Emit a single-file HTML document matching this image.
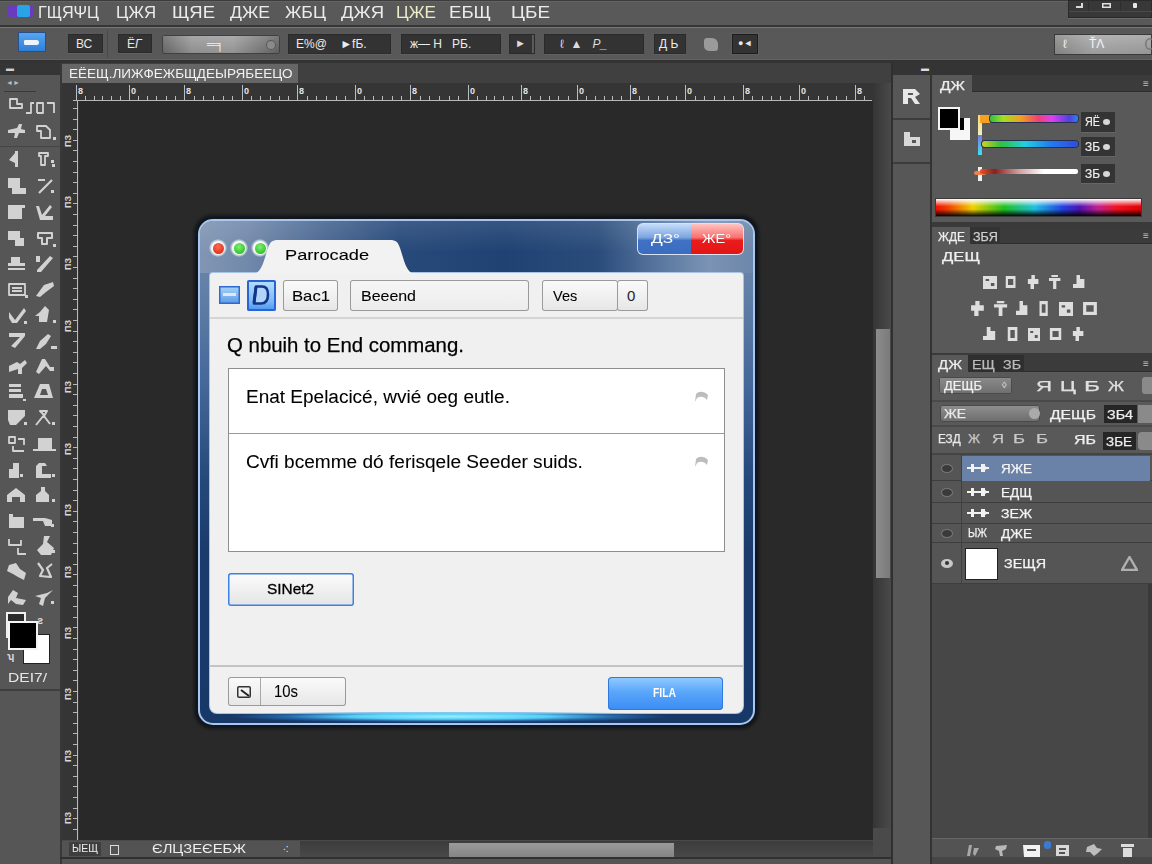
<!DOCTYPE html><html><head><meta charset="utf-8"><style>
*{margin:0;padding:0;box-sizing:border-box}
html,body{width:1152px;height:864px;overflow:hidden;background:#4a4a4a;font-family:"Liberation Sans",sans-serif}
div,span,svg{position:absolute}
.t{white-space:nowrap;line-height:1}
.db{background:#333333;box-shadow:inset 0 0 0 1px #2b2b2b,0 1px 0 #626262}
</style></head><body>
<div style="left:0px;top:0px;width:1152px;height:26px;background:#595959"></div>
<div style="left:0px;top:0px;width:1152px;height:1px;background:#3c3c3c"></div>
<div style="left:0px;top:1px;width:1152px;height:1px;background:#636363"></div>
<div style="left:0px;top:25px;width:1152px;height:2px;background:#363636"></div>
<div style="left:8px;top:5px;width:25px;height:12px;background:#6b3bbf;border-radius:2px"></div>
<div style="left:17px;top:5px;width:13px;height:12px;background:#29a3e8;border-radius:2px"></div>
<span class="t" style="left:38px;top:4px;font-size:17px;color:#ececec;transform-origin:0 0;transform:scaleX(0.950);">ГЩЯΨЦ</span>
<span class="t" style="left:116px;top:4px;font-size:17px;color:#ececec;transform-origin:0 0;transform:scaleX(0.986);">ЦЖЯ</span>
<span class="t" style="left:172px;top:4px;font-size:17px;color:#ececec;transform-origin:0 0;transform:scaleX(1.087);">ЩЯЕ</span>
<span class="t" style="left:230px;top:4px;font-size:17px;color:#ececec;transform-origin:0 0;transform:scaleX(1.038);">ДЖЕ</span>
<span class="t" style="left:285px;top:4px;font-size:17px;color:#ececec;transform-origin:0 0;transform:scaleX(1.040);">ЖБЦ</span>
<span class="t" style="left:341px;top:4px;font-size:17px;color:#ececec;transform-origin:0 0;transform:scaleX(1.089);">ДЖЯ</span>
<span class="t" style="left:396px;top:4px;font-size:17px;color:#ecebc8;transform-origin:0 0;transform:scaleX(1.010);">ЦЖЕ</span>
<span class="t" style="left:449px;top:4px;font-size:17px;color:#ececec;transform-origin:0 0;transform:scaleX(1.093);">ЕБЩ</span>
<span class="t" style="left:511px;top:4px;font-size:17px;color:#ececec;transform-origin:0 0;transform:scaleX(1.112);">ЦБЕ</span>
<div style="left:1068px;top:0px;width:84px;height:18px;background:#383838;box-shadow:inset 0 0 0 1px #2a2a2a,0 1px 0 #6a6a6a"></div>
<div style="left:1069px;top:11px;width:83px;height:1px;background:#4a4a4a"></div>
<div style="left:1088px;top:0px;width:1px;height:11px;background:#2e2e2e"></div>
<div style="left:1120px;top:0px;width:1px;height:11px;background:#2e2e2e"></div>
<div style="left:1076px;top:3px;width:7px;height:5px;box-shadow:inset -2px -2px 0 #d8d8d8"></div>
<div style="left:1102px;top:3px;width:9px;height:5px;box-shadow:inset 0 0 0 1.5px #e0e0e0"></div>
<div style="left:1133px;top:3px;width:4px;height:5px;background:#e8e8e8;border-radius:1px"></div>
<div style="left:0px;top:27px;width:1152px;height:35px;background:#585858"></div>
<div style="left:0px;top:27px;width:1152px;height:1px;background:#767676"></div>
<div style="left:0px;top:59px;width:1152px;height:1px;background:#626262"></div>
<div style="left:0px;top:60px;width:1152px;height:3px;background:#333333"></div>
<div style="left:19px;top:33px;width:26px;height:18px;background:linear-gradient(#56a6f4,#2f7fd8);box-shadow:0 0 0 1px #2a4f88"></div>
<div style="left:24px;top:40px;width:15px;height:5px;background:#f0f4ff;border-radius:2px 4px 4px 2px"></div>
<div class="db" style="left:68px;top:34px;width:35px;height:19px;"></div>
<span class="t" style="left:76px;top:38px;font-size:12px;color:#e8e8e8;">ВС</span>
<div style="left:107px;top:30px;width:1px;height:28px;background:#4a4a4a"></div>
<div class="db" style="left:118px;top:34px;width:34px;height:19px;"></div>
<span class="t" style="left:127px;top:38px;font-size:12px;color:#e8e8e8;">Ё<i>Г</i></span>
<div style="left:162px;top:35px;width:118px;height:19px;background:linear-gradient(rgba(255,255,255,.12),rgba(0,0,0,.1)),linear-gradient(90deg,#6c6c6c,#9c9c9c 25%,#a2a2a2 60%,#7a7a7a 88%,#666);border-radius:2px;box-shadow:inset 0 0 0 1px #404040"></div>
<span class="t" style="left:207px;top:38px;font-size:12px;color:#f4f4f4;">═╕</span>
<div style="left:266px;top:40px;width:10px;height:10px;border-radius:50%;background:#8a8a8a;box-shadow:inset 0 0 0 1px #555"></div>
<div class="db" style="left:288px;top:34px;width:103px;height:20px;"></div>
<span class="t" style="left:296px;top:38px;font-size:12px;color:#ececec;">Е%@&nbsp;&nbsp;&nbsp;&nbsp;►fБ.</span>
<div class="db" style="left:401px;top:34px;width:100px;height:20px;"></div>
<span class="t" style="left:410px;top:38px;font-size:12px;color:#ececec;">ж—&nbsp;Н&nbsp;&nbsp;&nbsp;РБ.</span>
<div class="db" style="left:509px;top:34px;width:26px;height:20px;box-shadow:inset 0 0 0 1px #2b2b2b,inset -3px 0 0 #5a5a5a"></div>
<span class="t" style="left:515px;top:38px;font-size:11px;color:#dcdcdc;">►</span>
<div class="db" style="left:544px;top:34px;width:100px;height:20px;"></div>
<span class="t" style="left:560px;top:38px;font-size:12px;color:#dcdcdc;">ℓ&nbsp;&nbsp;▲&nbsp;&nbsp;&nbsp;<i>P_</i></span>
<div class="db" style="left:654px;top:34px;width:32px;height:20px;"></div>
<span class="t" style="left:659px;top:38px;font-size:12px;color:#ececec;">Д&nbsp;Ь</span>
<div style="left:704px;top:38px;width:14px;height:13px;background:#9a9a9a;border-radius:3px 6px 3px 5px"></div>
<div class="db" style="left:732px;top:34px;width:26px;height:20px;box-shadow:inset 0 0 0 1px #1e1e1e,0 0 0 1px #5e5e5e"></div>
<span class="t" style="left:738px;top:39px;font-size:9px;color:#e8e8e8;">●◄</span>
<div style="left:1054px;top:34px;width:98px;height:21px;background:linear-gradient(rgba(255,255,255,.15),rgba(0,0,0,.08)),linear-gradient(90deg,#8a8a8a,#a8a8a8 40%,#a0a0a0);box-shadow:inset 0 0 0 1px #3a3a3a"></div>
<div style="left:1145px;top:38px;width:10px;height:12px;border-radius:50%;box-shadow:inset 0 0 0 1.5px #777"></div>
<span class="t" style="left:1063px;top:38px;font-size:12px;color:#f0f0f0;">ℓ</span>
<span class="t" style="left:1089px;top:38px;font-size:12px;color:#f4f4f4;">ŤΛ</span>
<div style="left:0px;top:63px;width:60px;height:801px;background:#565656"></div>
<div style="left:0px;top:63px;width:60px;height:12px;background:#353535"></div>
<span class="t" style="left:6px;top:65px;font-size:8px;color:#cfcfcf;">▬</span>
<div style="left:60px;top:63px;width:2px;height:801px;background:#383838"></div>
<span class="t" style="left:6px;top:79px;font-size:7px;color:#bdbdbd;">◄►</span>
<div style="left:4px;top:91px;width:32px;height:1px;background:#3a3a3a"></div>
<div style="left:0px;top:146px;width:60px;height:1px;background:#454545"></div>
<div style="left:0px;top:689px;width:60px;height:2px;background:#3e3e3e"></div>
<div style="left:62px;top:63px;width:830px;height:20px;background:#404040"></div>
<div style="left:62px;top:64px;width:236px;height:19px;background:#666666"></div>
<span class="t" style="left:69px;top:67px;font-size:13px;color:#f2f2f2;transform-origin:0 0;transform:scaleX(1.039);">ЕЁЕЩ.ЛИЖФЕЖБЩДЕЫРЯБЕЕЦО</span>
<div style="left:62px;top:83px;width:811px;height:18px;background:#353535"></div>
<div style="left:62px;top:83px;width:17px;height:757px;background:#353535"></div>
<div style="left:873px;top:83px;width:19px;height:18px;background:#4a4a4a"></div>
<div style="left:79px;top:101px;width:794px;height:739px;background:#292929"></div>
<svg style="left:9px;top:98px" width="14" height="11" viewBox="0 0 14 11"><path d="M1 1 H8 V6 H13 V10 H1 Z" fill="none" stroke="#d2d2d2" stroke-width="1.8" stroke-linejoin="round"/></svg>
<svg style="left:25px;top:101px" width="31" height="13" viewBox="0 0 31 13"><path d="M1 12 H6 V2 H9 M12 12 V2 H18 V12 H12 M22 2 H29 V12" fill="none" stroke="#d2d2d2" stroke-width="1.8" stroke-linejoin="round"/></svg>
<svg style="left:7px;top:124px" width="19" height="14" viewBox="0 0 19 14"><path d="M1 6 L10 4 L12 0 L15 0 L14 5 L18 6 L18 9 L12 9 L10 14 L7 14 L8 9 L1 9 Z" fill="#d2d2d2" /></svg>
<svg style="left:36px;top:125px" width="16" height="14" viewBox="0 0 16 14"><path d="M1 1 H10 L14 5 V13 H5 V6 H1 Z" fill="none" stroke="#d2d2d2" stroke-width="1.8" stroke-linejoin="round"/></svg>
<div style="left:53px;top:137px;width:3px;height:3px;background:#d2d2d2"></div>
<svg style="left:9px;top:151px" width="10" height="16" viewBox="0 0 10 16"><path d="M6 0 H9 V16 H6 V12 L0 9 L6 2 Z" fill="#d2d2d2" /></svg>
<svg style="left:38px;top:152px" width="12" height="14" viewBox="0 0 12 14"><path d="M1 1 H10 V4 H7 V13 H3 V4 H1 Z" fill="none" stroke="#d2d2d2" stroke-width="1.8" stroke-linejoin="round"/></svg>
<div style="left:51px;top:160px;width:3px;height:3px;background:#d2d2d2"></div>
<div style="left:52px;top:164px;width:3px;height:3px;background:#d2d2d2"></div>
<svg style="left:8px;top:178px" width="20" height="16" viewBox="0 0 20 16"><path d="M0 0 H12 V10 H18 V16 H4 V10 H0 Z" fill="#d2d2d2" /></svg>
<svg style="left:37px;top:179px" width="16" height="15" viewBox="0 0 16 15"><path d="M1 1 H8 M15 1 L2 14" fill="none" stroke="#d2d2d2" stroke-width="2.2" stroke-linejoin="round"/></svg>
<div style="left:51px;top:190px;width:3px;height:3px;background:#d2d2d2"></div>
<svg style="left:8px;top:205px" width="17" height="14" viewBox="0 0 17 14"><path d="M0 0 H17 V3 H14 V14 H0 Z" fill="#d2d2d2" /></svg>
<svg style="left:36px;top:205px" width="18" height="15" viewBox="0 0 18 15"><path d="M0 1 H3 L6 10 L14 0 L16 2 L9 11 H17 V15 H4 Z" fill="#d2d2d2" /></svg>
<svg style="left:8px;top:231px" width="17" height="15" viewBox="0 0 17 15"><path d="M0 0 H12 V7 H16 V15 H7 V9 H0 Z" fill="#d2d2d2" /></svg>
<svg style="left:37px;top:232px" width="17" height="13" viewBox="0 0 17 13"><path d="M1 1 H15 V6 H10 V12 H5 V6 H1 Z" fill="none" stroke="#d2d2d2" stroke-width="2" stroke-linejoin="round"/></svg>
<div style="left:53px;top:244px;width:3px;height:3px;background:#d2d2d2"></div>
<svg style="left:8px;top:257px" width="17" height="13" viewBox="0 0 17 13"><path d="M3 0 H12 V6 H17 V9 H0 V6 H3 Z M0 11 H17 V13 H0 Z" fill="#d2d2d2" /></svg>
<svg style="left:36px;top:256px" width="17" height="16" viewBox="0 0 17 16"><path d="M1 14 L14 0 L17 2 L5 16 H1 Z M0 0 H4 V6 H0 Z" fill="#d2d2d2" /></svg>
<svg style="left:8px;top:283px" width="18" height="13" viewBox="0 0 18 13"><path d="M1 1 H17 V12 H1 Z M4 5 H14 M4 8 H14" fill="none" stroke="#d2d2d2" stroke-width="1.8" stroke-linejoin="round"/></svg>
<div style="left:25px;top:295px;width:3px;height:3px;background:#d2d2d2"></div>
<svg style="left:36px;top:282px" width="19" height="16" viewBox="0 0 19 16"><path d="M8 3 L17 0 L18 4 L10 10 L4 15 L0 14 Z" fill="#d2d2d2" /></svg>
<svg style="left:9px;top:308px" width="17" height="15" viewBox="0 0 17 15"><path d="M0 4 L6 12 L15 0 L17 3 L8 15 H3 L0 10 Z" fill="#d2d2d2" /></svg>
<div style="left:24px;top:321px;width:3px;height:3px;background:#d2d2d2"></div>
<svg style="left:35px;top:306px" width="17" height="16" viewBox="0 0 17 16"><path d="M5 6 L10 0 L14 4 L12 16 H4 V10 H0 Z" fill="#d2d2d2" /></svg>
<div style="left:53px;top:320px;width:3px;height:3px;background:#d2d2d2"></div>
<svg style="left:9px;top:333px" width="16" height="15" viewBox="0 0 16 15"><path d="M0 0 H16 V3 L6 15 L2 13 L11 4 H0 Z" fill="#d2d2d2" /></svg>
<svg style="left:36px;top:334px" width="19" height="15" viewBox="0 0 19 15"><path d="M4 7 L12 0 L15 2 L10 10 L4 15 L0 15 Z" fill="#d2d2d2" /></svg>
<div style="left:51px;top:346px;width:3px;height:3px;background:#d2d2d2"></div>
<div style="left:54px;top:346px;width:3px;height:3px;background:#d2d2d2"></div>
<svg style="left:9px;top:360px" width="18" height="14" viewBox="0 0 18 14"><path d="M0 6 L8 2 L11 4 L16 0 L18 3 L13 8 V14 H9 V9 L0 12 Z" fill="#d2d2d2" /></svg>
<svg style="left:36px;top:359px" width="18" height="15" viewBox="0 0 18 15"><path d="M6 0 L9 0 L14 8 H18 V12 H14 L10 7 L3 15 L0 13 Z" fill="#d2d2d2" /></svg>
<svg style="left:9px;top:384px" width="17" height="17" viewBox="0 0 17 17"><path d="M0 0 H12 V3 H0 Z M0 5 H12 V8 H0 Z M0 10 H14 V14 H0 Z M14 15 H17 V17 H14 Z" fill="#d2d2d2" /></svg>
<svg style="left:34px;top:384px" width="19" height="14" viewBox="0 0 19 14"><path d="M6 0 H15 L19 14 H0 Z" fill="#d2d2d2" /></svg>
<svg style="left:40px;top:389px" width="8" height="6" viewBox="0 0 8 6"><path d="M2 0 H6 L8 6 H0 Z" fill="#555" /></svg>
<svg style="left:8px;top:410px" width="18" height="15" viewBox="0 0 18 15"><path d="M0 0 H17 V6 L8 15 H2 L0 10 Z" fill="#d2d2d2" /></svg>
<div style="left:24px;top:422px;width:3px;height:3px;background:#d2d2d2"></div>
<svg style="left:35px;top:410px" width="17" height="16" viewBox="0 0 17 16"><path d="M1 15 L9 5 L5 1 H12 L9 6 L15 14" fill="none" stroke="#d2d2d2" stroke-width="2" stroke-linejoin="round"/></svg>
<div style="left:52px;top:422px;width:3px;height:3px;background:#d2d2d2"></div>
<svg style="left:8px;top:436px" width="17" height="16" viewBox="0 0 17 16"><path d="M1 1 H7 V7 H1 Z M10 3 H16 V9 M5 10 V15 H16" fill="none" stroke="#d2d2d2" stroke-width="1.8" stroke-linejoin="round"/></svg>
<svg style="left:33px;top:438px" width="23" height="14" viewBox="0 0 23 14"><path d="M5 0 H19 V11 H23 V13 H0 V11 H5 Z" fill="#d2d2d2" /></svg>
<svg style="left:9px;top:463px" width="11" height="15" viewBox="0 0 11 15"><path d="M4 0 H10 V15 H0 V6 L4 6 Z" fill="#d2d2d2" /></svg>
<div style="left:20px;top:474px;width:3px;height:3px;background:#d2d2d2"></div>
<svg style="left:36px;top:463px" width="18" height="15" viewBox="0 0 18 15"><path d="M3 0 H9 L11 3 H6 V11 H15 V15 H0 V3 Z" fill="#d2d2d2" /></svg>
<div style="left:52px;top:474px;width:3px;height:3px;background:#d2d2d2"></div>
<svg style="left:7px;top:488px" width="18" height="14" viewBox="0 0 18 14"><path d="M9 0 L18 7 V14 H13 V9 H5 V14 H0 V7 Z" fill="#d2d2d2" /></svg>
<svg style="left:36px;top:487px" width="14" height="15" viewBox="0 0 14 15"><path d="M5 0 H9 V4 L13 8 V15 H0 V8 L5 4 Z" fill="#d2d2d2" /></svg>
<div style="left:52px;top:499px;width:3px;height:3px;background:#d2d2d2"></div>
<svg style="left:9px;top:514px" width="15" height="14" viewBox="0 0 15 14"><path d="M0 0 H4 V3 H15 V14 H0 Z" fill="#d2d2d2" /></svg>
<svg style="left:33px;top:518px" width="19" height="8" viewBox="0 0 19 8"><path d="M0 0 H12 L19 2 V8 H12 L10 3 H0 Z" fill="#d2d2d2" /></svg>
<div style="left:51px;top:524px;width:3px;height:3px;background:#d2d2d2"></div>
<svg style="left:8px;top:538px" width="19" height="17" viewBox="0 0 19 17"><path d="M1 1 V7 H13 V2 M10 10 V16 H18" fill="none" stroke="#d2d2d2" stroke-width="1.8" stroke-linejoin="round"/></svg>
<svg style="left:37px;top:536px" width="17" height="20" viewBox="0 0 17 20"><path d="M7 0 H13 L10 6 L17 12 L14 19 H4 L0 14 L6 8 Z" fill="#d2d2d2" /></svg>
<div style="left:52px;top:550px;width:3px;height:3px;background:#d2d2d2"></div>
<svg style="left:7px;top:563px" width="19" height="17" viewBox="0 0 19 17"><path d="M2 2 L9 0 L13 6 L19 10 L17 17 L11 14 L6 11 L0 8 Z" fill="#d2d2d2" /></svg>
<svg style="left:35px;top:562px" width="18" height="16" viewBox="0 0 18 16"><path d="M3 1 L8 8 L5 14 L16 15 L12 6 L17 2" fill="none" stroke="#d2d2d2" stroke-width="2.2" stroke-linejoin="round"/></svg>
<svg style="left:8px;top:590px" width="18" height="15" viewBox="0 0 18 15"><path d="M5 0 L10 3 L8 8 L18 10 L15 15 L8 14 L3 10 L0 14 V7 Z" fill="#d2d2d2" /></svg>
<svg style="left:35px;top:590px" width="18" height="16" viewBox="0 0 18 16"><path d="M18 0 L10 8 L8 16 L4 14 L6 8 L0 6 L12 3 Z" fill="#d2d2d2" /></svg>
<div style="left:51px;top:601px;width:3px;height:3px;background:#d2d2d2"></div>
<div style="left:6px;top:612px;width:20px;height:26px;background:#2a2a2a;box-shadow:inset 0 0 0 2px #f0f0f0"></div>
<div style="left:24px;top:635px;width:25px;height:28px;background:#ffffff;box-shadow:0 0 0 1px #222"></div>
<div style="left:10px;top:623px;width:26px;height:25px;background:#000;box-shadow:0 0 0 2px #f4f4f4"></div>
<span class="t" style="left:37px;top:615px;font-size:11px;color:#ddd;font-weight:bold">ƨ</span>
<span class="t" style="left:7px;top:652px;font-size:10px;color:#ddd;font-weight:bold">ʮ</span>
<span class="t" style="left:8px;top:672px;font-size:12px;color:#e6e6e6;transform-origin:0 0;transform:scaleX(1.299);">DEI7/</span>
<div style="left:76px;top:85px;width:1px;height:15px;background:#bdbdbd"></div>
<span class="t" style="left:78px;top:87px;font-size:9px;color:#e4e4e4;font-weight:bold">8</span>
<div style="left:85px;top:96px;width:1px;height:4px;background:#bdbdbd"></div>
<div style="left:94px;top:96px;width:1px;height:4px;background:#bdbdbd"></div>
<div style="left:102px;top:96px;width:1px;height:4px;background:#bdbdbd"></div>
<div style="left:111px;top:96px;width:1px;height:4px;background:#bdbdbd"></div>
<div style="left:120px;top:96px;width:1px;height:4px;background:#bdbdbd"></div>
<div style="left:129px;top:85px;width:1px;height:15px;background:#bdbdbd"></div>
<span class="t" style="left:131px;top:87px;font-size:9px;color:#e4e4e4;font-weight:bold">0</span>
<div style="left:138px;top:96px;width:1px;height:4px;background:#bdbdbd"></div>
<div style="left:147px;top:96px;width:1px;height:4px;background:#bdbdbd"></div>
<div style="left:156px;top:96px;width:1px;height:4px;background:#bdbdbd"></div>
<div style="left:166px;top:96px;width:1px;height:4px;background:#bdbdbd"></div>
<div style="left:175px;top:96px;width:1px;height:4px;background:#bdbdbd"></div>
<div style="left:184px;top:85px;width:1px;height:15px;background:#bdbdbd"></div>
<span class="t" style="left:186px;top:87px;font-size:9px;color:#e4e4e4;font-weight:bold">8</span>
<div style="left:194px;top:96px;width:1px;height:4px;background:#bdbdbd"></div>
<div style="left:203px;top:96px;width:1px;height:4px;background:#bdbdbd"></div>
<div style="left:213px;top:96px;width:1px;height:4px;background:#bdbdbd"></div>
<div style="left:223px;top:96px;width:1px;height:4px;background:#bdbdbd"></div>
<div style="left:232px;top:96px;width:1px;height:4px;background:#bdbdbd"></div>
<div style="left:242px;top:85px;width:1px;height:15px;background:#bdbdbd"></div>
<span class="t" style="left:244px;top:87px;font-size:9px;color:#e4e4e4;font-weight:bold">0</span>
<div style="left:251px;top:96px;width:1px;height:4px;background:#bdbdbd"></div>
<div style="left:260px;top:96px;width:1px;height:4px;background:#bdbdbd"></div>
<div style="left:270px;top:96px;width:1px;height:4px;background:#bdbdbd"></div>
<div style="left:279px;top:96px;width:1px;height:4px;background:#bdbdbd"></div>
<div style="left:288px;top:96px;width:1px;height:4px;background:#bdbdbd"></div>
<div style="left:297px;top:85px;width:1px;height:15px;background:#bdbdbd"></div>
<span class="t" style="left:299px;top:87px;font-size:9px;color:#e4e4e4;font-weight:bold">8</span>
<div style="left:307px;top:96px;width:1px;height:4px;background:#bdbdbd"></div>
<div style="left:316px;top:96px;width:1px;height:4px;background:#bdbdbd"></div>
<div style="left:326px;top:96px;width:1px;height:4px;background:#bdbdbd"></div>
<div style="left:336px;top:96px;width:1px;height:4px;background:#bdbdbd"></div>
<div style="left:345px;top:96px;width:1px;height:4px;background:#bdbdbd"></div>
<div style="left:355px;top:85px;width:1px;height:15px;background:#bdbdbd"></div>
<span class="t" style="left:357px;top:87px;font-size:9px;color:#e4e4e4;font-weight:bold">0</span>
<div style="left:364px;top:96px;width:1px;height:4px;background:#bdbdbd"></div>
<div style="left:373px;top:96px;width:1px;height:4px;background:#bdbdbd"></div>
<div style="left:382px;top:96px;width:1px;height:4px;background:#bdbdbd"></div>
<div style="left:392px;top:96px;width:1px;height:4px;background:#bdbdbd"></div>
<div style="left:401px;top:96px;width:1px;height:4px;background:#bdbdbd"></div>
<div style="left:410px;top:85px;width:1px;height:15px;background:#bdbdbd"></div>
<span class="t" style="left:412px;top:87px;font-size:9px;color:#e4e4e4;font-weight:bold">8</span>
<div style="left:420px;top:96px;width:1px;height:4px;background:#bdbdbd"></div>
<div style="left:429px;top:96px;width:1px;height:4px;background:#bdbdbd"></div>
<div style="left:439px;top:96px;width:1px;height:4px;background:#bdbdbd"></div>
<div style="left:449px;top:96px;width:1px;height:4px;background:#bdbdbd"></div>
<div style="left:458px;top:96px;width:1px;height:4px;background:#bdbdbd"></div>
<div style="left:468px;top:85px;width:1px;height:15px;background:#bdbdbd"></div>
<span class="t" style="left:470px;top:87px;font-size:9px;color:#e4e4e4;font-weight:bold">0</span>
<div style="left:477px;top:96px;width:1px;height:4px;background:#bdbdbd"></div>
<div style="left:486px;top:96px;width:1px;height:4px;background:#bdbdbd"></div>
<div style="left:494px;top:96px;width:1px;height:4px;background:#bdbdbd"></div>
<div style="left:503px;top:96px;width:1px;height:4px;background:#bdbdbd"></div>
<div style="left:512px;top:96px;width:1px;height:4px;background:#bdbdbd"></div>
<div style="left:521px;top:85px;width:1px;height:15px;background:#bdbdbd"></div>
<span class="t" style="left:523px;top:87px;font-size:9px;color:#e4e4e4;font-weight:bold">8</span>
<div style="left:530px;top:96px;width:1px;height:4px;background:#bdbdbd"></div>
<div style="left:540px;top:96px;width:1px;height:4px;background:#bdbdbd"></div>
<div style="left:549px;top:96px;width:1px;height:4px;background:#bdbdbd"></div>
<div style="left:558px;top:96px;width:1px;height:4px;background:#bdbdbd"></div>
<div style="left:568px;top:96px;width:1px;height:4px;background:#bdbdbd"></div>
<div style="left:577px;top:85px;width:1px;height:15px;background:#bdbdbd"></div>
<span class="t" style="left:579px;top:87px;font-size:9px;color:#e4e4e4;font-weight:bold">0</span>
<div style="left:586px;top:96px;width:1px;height:4px;background:#bdbdbd"></div>
<div style="left:595px;top:96px;width:1px;height:4px;background:#bdbdbd"></div>
<div style="left:604px;top:96px;width:1px;height:4px;background:#bdbdbd"></div>
<div style="left:612px;top:96px;width:1px;height:4px;background:#bdbdbd"></div>
<div style="left:621px;top:96px;width:1px;height:4px;background:#bdbdbd"></div>
<div style="left:630px;top:85px;width:1px;height:15px;background:#bdbdbd"></div>
<span class="t" style="left:632px;top:87px;font-size:9px;color:#e4e4e4;font-weight:bold">8</span>
<div style="left:639px;top:96px;width:1px;height:4px;background:#bdbdbd"></div>
<div style="left:648px;top:96px;width:1px;height:4px;background:#bdbdbd"></div>
<div style="left:658px;top:96px;width:1px;height:4px;background:#bdbdbd"></div>
<div style="left:667px;top:96px;width:1px;height:4px;background:#bdbdbd"></div>
<div style="left:676px;top:96px;width:1px;height:4px;background:#bdbdbd"></div>
<div style="left:685px;top:85px;width:1px;height:15px;background:#bdbdbd"></div>
<span class="t" style="left:687px;top:87px;font-size:9px;color:#e4e4e4;font-weight:bold">0</span>
<div style="left:695px;top:96px;width:1px;height:4px;background:#bdbdbd"></div>
<div style="left:704px;top:96px;width:1px;height:4px;background:#bdbdbd"></div>
<div style="left:714px;top:96px;width:1px;height:4px;background:#bdbdbd"></div>
<div style="left:724px;top:96px;width:1px;height:4px;background:#bdbdbd"></div>
<div style="left:733px;top:96px;width:1px;height:4px;background:#bdbdbd"></div>
<div style="left:743px;top:85px;width:1px;height:15px;background:#bdbdbd"></div>
<span class="t" style="left:745px;top:87px;font-size:9px;color:#e4e4e4;font-weight:bold">8</span>
<div style="left:752px;top:96px;width:1px;height:4px;background:#bdbdbd"></div>
<div style="left:762px;top:96px;width:1px;height:4px;background:#bdbdbd"></div>
<div style="left:771px;top:96px;width:1px;height:4px;background:#bdbdbd"></div>
<div style="left:780px;top:96px;width:1px;height:4px;background:#bdbdbd"></div>
<div style="left:790px;top:96px;width:1px;height:4px;background:#bdbdbd"></div>
<div style="left:799px;top:85px;width:1px;height:15px;background:#bdbdbd"></div>
<span class="t" style="left:801px;top:87px;font-size:9px;color:#e4e4e4;font-weight:bold">0</span>
<div style="left:808px;top:96px;width:1px;height:4px;background:#bdbdbd"></div>
<div style="left:818px;top:96px;width:1px;height:4px;background:#bdbdbd"></div>
<div style="left:827px;top:96px;width:1px;height:4px;background:#bdbdbd"></div>
<div style="left:836px;top:96px;width:1px;height:4px;background:#bdbdbd"></div>
<div style="left:846px;top:96px;width:1px;height:4px;background:#bdbdbd"></div>
<div style="left:855px;top:85px;width:1px;height:15px;background:#bdbdbd"></div>
<span class="t" style="left:857px;top:87px;font-size:9px;color:#e4e4e4;font-weight:bold">8</span>
<div style="left:864px;top:96px;width:1px;height:4px;background:#bdbdbd"></div>
<div style="left:73px;top:100px;width:799px;height:1px;background:#b8b8b8"></div>
<div style="left:73px;top:108px;width:4px;height:1px;background:#b8b8b8"></div>
<div style="left:73px;top:119px;width:4px;height:1px;background:#b8b8b8"></div>
<div style="left:73px;top:129px;width:4px;height:1px;background:#b8b8b8"></div>
<div style="left:73px;top:140px;width:4px;height:1px;background:#b8b8b8"></div>
<div style="left:73px;top:150px;width:4px;height:1px;background:#b8b8b8"></div>
<div style="left:73px;top:161px;width:4px;height:1px;background:#b8b8b8"></div>
<div style="left:73px;top:172px;width:4px;height:1px;background:#b8b8b8"></div>
<div style="left:73px;top:182px;width:4px;height:1px;background:#b8b8b8"></div>
<div style="left:73px;top:193px;width:4px;height:1px;background:#b8b8b8"></div>
<div style="left:73px;top:203px;width:4px;height:1px;background:#b8b8b8"></div>
<div style="left:73px;top:214px;width:4px;height:1px;background:#b8b8b8"></div>
<div style="left:73px;top:225px;width:4px;height:1px;background:#b8b8b8"></div>
<div style="left:73px;top:235px;width:4px;height:1px;background:#b8b8b8"></div>
<div style="left:73px;top:246px;width:4px;height:1px;background:#b8b8b8"></div>
<div style="left:73px;top:256px;width:4px;height:1px;background:#b8b8b8"></div>
<div style="left:73px;top:267px;width:4px;height:1px;background:#b8b8b8"></div>
<div style="left:73px;top:278px;width:4px;height:1px;background:#b8b8b8"></div>
<div style="left:73px;top:288px;width:4px;height:1px;background:#b8b8b8"></div>
<div style="left:73px;top:299px;width:4px;height:1px;background:#b8b8b8"></div>
<div style="left:73px;top:309px;width:4px;height:1px;background:#b8b8b8"></div>
<div style="left:73px;top:320px;width:4px;height:1px;background:#b8b8b8"></div>
<div style="left:73px;top:331px;width:4px;height:1px;background:#b8b8b8"></div>
<div style="left:73px;top:341px;width:4px;height:1px;background:#b8b8b8"></div>
<div style="left:73px;top:352px;width:4px;height:1px;background:#b8b8b8"></div>
<div style="left:73px;top:362px;width:4px;height:1px;background:#b8b8b8"></div>
<div style="left:73px;top:373px;width:4px;height:1px;background:#b8b8b8"></div>
<div style="left:73px;top:384px;width:4px;height:1px;background:#b8b8b8"></div>
<div style="left:73px;top:394px;width:4px;height:1px;background:#b8b8b8"></div>
<div style="left:73px;top:405px;width:4px;height:1px;background:#b8b8b8"></div>
<div style="left:73px;top:415px;width:4px;height:1px;background:#b8b8b8"></div>
<div style="left:73px;top:426px;width:4px;height:1px;background:#b8b8b8"></div>
<div style="left:73px;top:437px;width:4px;height:1px;background:#b8b8b8"></div>
<div style="left:73px;top:447px;width:4px;height:1px;background:#b8b8b8"></div>
<div style="left:73px;top:458px;width:4px;height:1px;background:#b8b8b8"></div>
<div style="left:73px;top:468px;width:4px;height:1px;background:#b8b8b8"></div>
<div style="left:73px;top:479px;width:4px;height:1px;background:#b8b8b8"></div>
<div style="left:73px;top:490px;width:4px;height:1px;background:#b8b8b8"></div>
<div style="left:73px;top:500px;width:4px;height:1px;background:#b8b8b8"></div>
<div style="left:73px;top:511px;width:4px;height:1px;background:#b8b8b8"></div>
<div style="left:73px;top:521px;width:4px;height:1px;background:#b8b8b8"></div>
<div style="left:73px;top:532px;width:4px;height:1px;background:#b8b8b8"></div>
<div style="left:73px;top:543px;width:4px;height:1px;background:#b8b8b8"></div>
<div style="left:73px;top:553px;width:4px;height:1px;background:#b8b8b8"></div>
<div style="left:73px;top:564px;width:4px;height:1px;background:#b8b8b8"></div>
<div style="left:73px;top:574px;width:4px;height:1px;background:#b8b8b8"></div>
<div style="left:73px;top:585px;width:4px;height:1px;background:#b8b8b8"></div>
<div style="left:73px;top:596px;width:4px;height:1px;background:#b8b8b8"></div>
<div style="left:73px;top:606px;width:4px;height:1px;background:#b8b8b8"></div>
<div style="left:73px;top:617px;width:4px;height:1px;background:#b8b8b8"></div>
<div style="left:73px;top:627px;width:4px;height:1px;background:#b8b8b8"></div>
<div style="left:73px;top:638px;width:4px;height:1px;background:#b8b8b8"></div>
<div style="left:73px;top:649px;width:4px;height:1px;background:#b8b8b8"></div>
<div style="left:73px;top:659px;width:4px;height:1px;background:#b8b8b8"></div>
<div style="left:73px;top:670px;width:4px;height:1px;background:#b8b8b8"></div>
<div style="left:73px;top:680px;width:4px;height:1px;background:#b8b8b8"></div>
<div style="left:73px;top:691px;width:4px;height:1px;background:#b8b8b8"></div>
<div style="left:73px;top:702px;width:4px;height:1px;background:#b8b8b8"></div>
<div style="left:73px;top:712px;width:4px;height:1px;background:#b8b8b8"></div>
<div style="left:73px;top:723px;width:4px;height:1px;background:#b8b8b8"></div>
<div style="left:73px;top:733px;width:4px;height:1px;background:#b8b8b8"></div>
<div style="left:73px;top:744px;width:4px;height:1px;background:#b8b8b8"></div>
<div style="left:73px;top:755px;width:4px;height:1px;background:#b8b8b8"></div>
<div style="left:73px;top:765px;width:4px;height:1px;background:#b8b8b8"></div>
<div style="left:73px;top:776px;width:4px;height:1px;background:#b8b8b8"></div>
<div style="left:73px;top:786px;width:4px;height:1px;background:#b8b8b8"></div>
<div style="left:73px;top:797px;width:4px;height:1px;background:#b8b8b8"></div>
<div style="left:73px;top:808px;width:4px;height:1px;background:#b8b8b8"></div>
<div style="left:73px;top:818px;width:4px;height:1px;background:#b8b8b8"></div>
<div style="left:73px;top:829px;width:4px;height:1px;background:#b8b8b8"></div>
<span class="t" style="left:64px;top:147px;font-size:9px;font-weight:bold;color:#d8d8d8;transform-origin:0 0;transform:rotate(-90deg)">ПЗ</span>
<span class="t" style="left:64px;top:208px;font-size:9px;font-weight:bold;color:#d8d8d8;transform-origin:0 0;transform:rotate(-90deg)">ПЗ</span>
<span class="t" style="left:64px;top:270px;font-size:9px;font-weight:bold;color:#d8d8d8;transform-origin:0 0;transform:rotate(-90deg)">ПЗ</span>
<span class="t" style="left:64px;top:332px;font-size:9px;font-weight:bold;color:#d8d8d8;transform-origin:0 0;transform:rotate(-90deg)">ПЗ</span>
<span class="t" style="left:64px;top:393px;font-size:9px;font-weight:bold;color:#d8d8d8;transform-origin:0 0;transform:rotate(-90deg)">ПЗ</span>
<span class="t" style="left:64px;top:455px;font-size:9px;font-weight:bold;color:#d8d8d8;transform-origin:0 0;transform:rotate(-90deg)">ПЗ</span>
<span class="t" style="left:64px;top:516px;font-size:9px;font-weight:bold;color:#d8d8d8;transform-origin:0 0;transform:rotate(-90deg)">ПЗ</span>
<span class="t" style="left:64px;top:578px;font-size:9px;font-weight:bold;color:#d8d8d8;transform-origin:0 0;transform:rotate(-90deg)">ПЗ</span>
<span class="t" style="left:64px;top:639px;font-size:9px;font-weight:bold;color:#d8d8d8;transform-origin:0 0;transform:rotate(-90deg)">ПЗ</span>
<span class="t" style="left:64px;top:700px;font-size:9px;font-weight:bold;color:#d8d8d8;transform-origin:0 0;transform:rotate(-90deg)">ПЗ</span>
<span class="t" style="left:64px;top:762px;font-size:9px;font-weight:bold;color:#d8d8d8;transform-origin:0 0;transform:rotate(-90deg)">ПЗ</span>
<span class="t" style="left:64px;top:824px;font-size:9px;font-weight:bold;color:#d8d8d8;transform-origin:0 0;transform:rotate(-90deg)">ПЗ</span>
<div style="left:77px;top:100px;width:1px;height:740px;background:#b8b8b8"></div>
<div style="left:62px;top:841px;width:811px;height:17px;background:#444444"></div>
<div style="left:62px;top:841px;width:238px;height:17px;background:#535353"></div>
<div style="left:69px;top:842px;width:32px;height:14px;background:#3e3e3e"></div>
<span class="t" style="left:72px;top:843px;font-size:11px;color:#eee;transform-origin:0 0;transform:scaleX(0.949);">ЫЕЩ</span>
<div style="left:110px;top:845px;width:9px;height:10px;box-shadow:inset 0 0 0 1px #ddd"></div>
<span class="t" style="left:152px;top:843px;font-size:12px;color:#eee;transform-origin:0 0;transform:scaleX(1.233);">ЄЛЦЗЕЄЕБЖ</span>
<span class="t" style="left:283px;top:844px;font-size:10px;color:#eee;">∙:</span>
<div style="left:300px;top:841px;width:573px;height:17px;background:linear-gradient(#3c3c3c,#4a4a4a)"></div>
<div style="left:449px;top:843px;width:225px;height:14px;background:linear-gradient(#9a9a9a,#858585)"></div>
<div style="left:60px;top:857px;width:1092px;height:2px;background:#303030"></div>
<div style="left:62px;top:859px;width:830px;height:5px;background:#555555"></div>
<div style="left:873px;top:83px;width:18px;height:757px;background:linear-gradient(90deg,#353535,#4a4a4a)"></div>
<div style="left:876px;top:329px;width:14px;height:249px;background:linear-gradient(90deg,#8c8c8c,#7a7a7a)"></div>
<div style="left:873px;top:828px;width:18px;height:12px;background:#4a4a4a"></div>
<div style="left:891px;top:63px;width:2px;height:801px;background:#303030"></div>
<div style="left:893px;top:63px;width:259px;height:12px;background:#343434"></div>
<span class="t" style="left:921px;top:65px;font-size:8px;color:#ddd;">▬</span>
<div style="left:893px;top:75px;width:37px;height:789px;background:#575757"></div>
<div style="left:893px;top:118px;width:37px;height:2px;background:#3c3c3c"></div>
<div style="left:893px;top:162px;width:37px;height:2px;background:#3c3c3c"></div>
<svg style="left:902px;top:88px" width="19" height="17"><path d="M1 1 H13 L18 6 L13 9 L18 16 H13 L9 10 H6 V16 H1 Z M6 5 V7 H11 V5 Z" fill="#e8e8e8" fill-rule="evenodd"/></svg>
<svg style="left:903px;top:131px" width="18" height="16"><path d="M1 1 H7 V6 H17 V15 H1 Z M9 9 V12 H13 V9 Z" fill="#d8d8d8" fill-rule="evenodd"/></svg>
<div style="left:930px;top:75px;width:2px;height:789px;background:#333333"></div>
<div style="left:932px;top:75px;width:220px;height:789px;background:#464646"></div>
<div style="left:932px;top:75px;width:220px;height:147px;background:#595959"></div>
<div style="left:972px;top:75px;width:180px;height:17px;background:#3b3b3b;box-shadow:inset 0 -1px 0 #2e2e2e"></div>
<div style="left:933px;top:75px;width:39px;height:17px;background:#595959"></div>
<span class="t" style="left:940px;top:79px;font-size:13px;color:#eeeeee;transform-origin:0 0;transform:scaleX(1.201);-webkit-text-stroke:0.25px #eeeeee">ДЖ</span>
<span class="t" style="left:1143px;top:79px;font-size:10px;color:#bbb;">≡</span>
<div style="left:950px;top:118px;width:20px;height:22px;background:#f6f6f6"></div>
<div style="left:955px;top:118px;width:9px;height:12px;background:#000"></div>
<div style="left:938px;top:107px;width:22px;height:23px;background:#000;box-shadow:inset 0 0 0 2px #f4f4f4"></div>
<div style="left:978px;top:115px;width:4px;height:20px;background:linear-gradient(#f6d87a,#f0f0c0)"></div>
<div style="left:978px;top:135px;width:4px;height:20px;background:linear-gradient(#7a7ae0,#40e0f0)"></div>
<div style="left:978px;top:167px;width:4px;height:14px;background:#f0f0f0"></div>
<div style="left:974px;top:171px;width:12px;height:4px;background:#f08050;border-radius:2px"></div>
<div style="left:980px;top:115px;width:10px;height:8px;background:#f5a020"></div>
<div style="left:990px;top:115px;width:88px;height:7px;border-radius:3px;box-shadow:0 0 0 1px #2a3050;background:linear-gradient(90deg,#30c040,#a0e020 15%,#f0a020 35%,#f04070 55%,#e040f0 70%,#5040e0 90%,#3080f0)"></div>
<div style="left:982px;top:141px;width:96px;height:6px;border-radius:3px;box-shadow:0 0 0 1px #203050;background:linear-gradient(90deg,#d0d020,#30c040 20%,#20d0e0 45%,#2080f0 70%,#3050e0 95%)"></div>
<div style="left:980px;top:169px;width:98px;height:5px;border-radius:2px;background:linear-gradient(90deg,#f05020,#8a2020 15%,#d0a0a0 40%,#ffffff 65%,#ffffff)"></div>
<div style="left:1081px;top:112px;width:34px;height:20px;background:#343434;box-shadow:0 1px 0 #666"></div>
<span class="t" style="left:1085px;top:115px;font-size:13px;color:#eeeeee;transform-origin:0 0;transform:scaleX(0.830);-webkit-text-stroke:0.2px #eee">ЯЁ</span>
<div style="left:1103px;top:119px;width:7px;height:6px;border-radius:50%;background:#d8d8d8"></div>
<div style="left:1081px;top:137px;width:34px;height:19px;background:#343434;box-shadow:0 1px 0 #666"></div>
<span class="t" style="left:1085px;top:140px;font-size:13px;color:#eeeeee;transform-origin:0 0;transform:scaleX(0.916);-webkit-text-stroke:0.2px #eee">ЗБ</span>
<div style="left:1103px;top:144px;width:7px;height:6px;border-radius:50%;background:#d8d8d8"></div>
<div style="left:1081px;top:164px;width:34px;height:19px;background:#343434;box-shadow:0 1px 0 #666"></div>
<span class="t" style="left:1085px;top:167px;font-size:13px;color:#eeeeee;transform-origin:0 0;transform:scaleX(0.916);-webkit-text-stroke:0.2px #eee">ЗБ</span>
<div style="left:1103px;top:171px;width:7px;height:6px;border-radius:50%;background:#d8d8d8"></div>
<div style="left:936px;top:199px;width:205px;height:17px;box-shadow:0 0 0 1px #3a3a3a;background:linear-gradient(rgba(255,255,255,1),rgba(255,255,255,.2) 35%,rgba(255,255,255,0) 45%,rgba(0,0,0,0) 60%,rgba(0,0,0,.95)),linear-gradient(90deg,#f01000,#f04000 6%,#f0d000 18%,#20c020 33%,#20c0e0 48%,#2040e0 62%,#5010b0 70%,#c02090 79%,#f01020 88%,#e00000)"></div>
<div style="left:932px;top:222px;width:220px;height:5px;background:#3a3a3a"></div>
<div style="left:932px;top:227px;width:220px;height:126px;background:#595959"></div>
<div style="left:970px;top:227px;width:182px;height:17px;background:#3b3b3b;box-shadow:inset 0 -1px 0 #2e2e2e"></div>
<div style="left:970px;top:227px;width:30px;height:17px;background:#333333"></div>
<span class="t" style="left:938px;top:230px;font-size:13px;color:#eeeeee;transform-origin:0 0;transform:scaleX(0.916);-webkit-text-stroke:0.25px #eeeeee">ЖДЕ</span>
<span class="t" style="left:973px;top:230px;font-size:13px;color:#cfcfcf;transform-origin:0 0;transform:scaleX(0.970);-webkit-text-stroke:0.25px #cfcfcf">ЗБЯ</span>
<span class="t" style="left:1143px;top:231px;font-size:10px;color:#bbb;">≡</span>
<span class="t" style="left:942px;top:250px;font-size:13px;color:#f0f0f0;transform-origin:0 0;transform:scaleX(1.281);-webkit-text-stroke:0.25px #f0f0f0">ДЕЩ</span>
<svg style="left:983px;top:275px" width="14" height="14" viewBox="0 0 16 14" preserveAspectRatio="none"><path d="M0 1 H16 V14 H0 Z M3 4 V6 H7 V4 Z M9 8 V11 H13 V8 Z" fill="#dedede" fill-rule="evenodd"/></svg>
<svg style="left:1005px;top:275px" width="12" height="14" viewBox="0 0 16 14" preserveAspectRatio="none"><path d="M1 1 H14 V13 H1 Z M4 4 V10 H11 V4 Z" fill="#dedede" fill-rule="evenodd"/></svg>
<svg style="left:1027px;top:275px" width="14" height="14" viewBox="0 0 16 14" preserveAspectRatio="none"><path d="M5 0 H9 V4 H13 V9 H8 V14 H4 V9 H1 V4 H5 Z" fill="#dedede" fill-rule="evenodd"/></svg>
<svg style="left:1049px;top:275px" width="13" height="14" viewBox="0 0 16 14" preserveAspectRatio="none"><path d="M0 3 H14 V6 H9 V14 H5 V6 H0 Z M3 0 H11 V2 H3 Z" fill="#dedede" fill-rule="evenodd"/></svg>
<svg style="left:1073px;top:275px" width="14" height="14" viewBox="0 0 16 14" preserveAspectRatio="none"><path d="M4 0 H8 V4 H13 V13 H0 V9 H4 Z" fill="#dedede" fill-rule="evenodd"/></svg>
<svg style="left:970px;top:301px" width="17" height="15" viewBox="0 0 16 14" preserveAspectRatio="none"><path d="M5 0 H9 V4 H13 V9 H8 V14 H4 V9 H1 V4 H5 Z" fill="#dedede" fill-rule="evenodd"/></svg>
<svg style="left:994px;top:301px" width="15" height="15" viewBox="0 0 16 14" preserveAspectRatio="none"><path d="M0 3 H14 V6 H9 V14 H5 V6 H0 Z M3 0 H11 V2 H3 Z" fill="#dedede" fill-rule="evenodd"/></svg>
<svg style="left:1016px;top:301px" width="14" height="15" viewBox="0 0 16 14" preserveAspectRatio="none"><path d="M4 0 H8 V4 H13 V13 H0 V9 H4 Z" fill="#dedede" fill-rule="evenodd"/></svg>
<svg style="left:1038px;top:301px" width="12" height="15" viewBox="0 0 16 14" preserveAspectRatio="none"><path d="M2 0 H13 V14 H2 Z M5 3 V11 H10 V3 Z" fill="#dedede" fill-rule="evenodd"/></svg>
<svg style="left:1059px;top:301px" width="14" height="15" viewBox="0 0 16 14" preserveAspectRatio="none"><path d="M0 1 H16 V14 H0 Z M3 4 V6 H7 V4 Z M9 8 V11 H13 V8 Z" fill="#dedede" fill-rule="evenodd"/></svg>
<svg style="left:1082px;top:301px" width="17" height="15" viewBox="0 0 16 14" preserveAspectRatio="none"><path d="M1 1 H14 V13 H1 Z M4 4 V10 H11 V4 Z" fill="#dedede" fill-rule="evenodd"/></svg>
<svg style="left:983px;top:327px" width="15" height="14" viewBox="0 0 16 14" preserveAspectRatio="none"><path d="M4 0 H8 V4 H13 V13 H0 V9 H4 Z" fill="#dedede" fill-rule="evenodd"/></svg>
<svg style="left:1006px;top:327px" width="14" height="14" viewBox="0 0 16 14" preserveAspectRatio="none"><path d="M2 0 H13 V14 H2 Z M5 3 V11 H10 V3 Z" fill="#dedede" fill-rule="evenodd"/></svg>
<svg style="left:1028px;top:327px" width="12" height="14" viewBox="0 0 16 14" preserveAspectRatio="none"><path d="M0 1 H16 V14 H0 Z M3 4 V6 H7 V4 Z M9 8 V11 H13 V8 Z" fill="#dedede" fill-rule="evenodd"/></svg>
<svg style="left:1049px;top:327px" width="14" height="14" viewBox="0 0 16 14" preserveAspectRatio="none"><path d="M1 1 H14 V13 H1 Z M4 4 V10 H11 V4 Z" fill="#dedede" fill-rule="evenodd"/></svg>
<svg style="left:1072px;top:327px" width="14" height="14" viewBox="0 0 16 14" preserveAspectRatio="none"><path d="M5 0 H9 V4 H13 V9 H8 V14 H4 V9 H1 V4 H5 Z" fill="#dedede" fill-rule="evenodd"/></svg>
<div style="left:932px;top:353px;width:220px;height:2px;background:#3a3a3a"></div>
<div style="left:932px;top:355px;width:220px;height:229px;background:#595959"></div>
<div style="left:968px;top:355px;width:184px;height:17px;background:#3b3b3b;box-shadow:inset 0 -1px 0 #2e2e2e"></div>
<div style="left:968px;top:355px;width:56px;height:17px;background:#2f2f2f"></div>
<span class="t" style="left:938px;top:358px;font-size:13px;color:#eeeeee;transform-origin:0 0;transform:scaleX(1.153);-webkit-text-stroke:0.25px #eeeeee">ДЖ</span>
<span class="t" style="left:972px;top:358px;font-size:13px;color:#bbbbbb;transform-origin:0 0;transform:scaleX(1.103);-webkit-text-stroke:0.25px #bbbbbb">ЕЩ</span>
<span class="t" style="left:1003px;top:358px;font-size:13px;color:#bbbbbb;transform-origin:0 0;transform:scaleX(1.099);-webkit-text-stroke:0.25px #bbbbbb">ЗБ</span>
<span class="t" style="left:1143px;top:359px;font-size:10px;color:#bbb;">≡</span>
<div style="left:939px;top:377px;width:73px;height:17px;border-radius:2px;background:linear-gradient(#8c8c8c,#6e6e6e);box-shadow:inset 0 0 0 1px #4a4a4a"></div>
<span class="t" style="left:944px;top:380px;font-size:12px;color:#f0f0f0;transform-origin:0 0;transform:scaleX(1.078);-webkit-text-stroke:0.25px #f0f0f0">ДЕЩБ</span>
<span class="t" style="left:1002px;top:381px;font-size:9px;color:#eee;">◊</span>
<span class="t" style="left:1036px;top:379px;font-size:14px;color:#e0e0e0;transform-origin:0 0;transform:scaleX(1.583);-webkit-text-stroke:0.25px #e0e0e0">Я</span>
<span class="t" style="left:1060px;top:379px;font-size:14px;color:#e0e0e0;transform-origin:0 0;transform:scaleX(1.545);-webkit-text-stroke:0.25px #e0e0e0">Ц</span>
<span class="t" style="left:1084px;top:379px;font-size:14px;color:#e0e0e0;transform-origin:0 0;transform:scaleX(1.741);-webkit-text-stroke:0.25px #e0e0e0">Б</span>
<span class="t" style="left:1108px;top:379px;font-size:14px;color:#e0e0e0;transform-origin:0 0;transform:scaleX(1.238);-webkit-text-stroke:0.25px #e0e0e0">Ж</span>
<div style="left:1142px;top:377px;width:10px;height:17px;background:#8a8a8a;border-radius:3px 0 0 3px"></div>
<div style="left:932px;top:400px;width:220px;height:2px;background:#4a4a4a"></div>
<div style="left:940px;top:405px;width:100px;height:17px;border-radius:3px;background:linear-gradient(#909090,#6c6c6c);box-shadow:inset 0 0 0 1px #4a4a4a"></div>
<span class="t" style="left:944px;top:408px;font-size:12px;color:#e8e8e8;transform-origin:0 0;transform:scaleX(1.153);-webkit-text-stroke:0.25px #e8e8e8">ЖЕ</span>
<div style="left:1029px;top:408px;width:11px;height:11px;border-radius:50%;background:#aaa"></div>
<span class="t" style="left:1050px;top:408px;font-size:13px;color:#f0f0f0;transform-origin:0 0;transform:scaleX(1.204);-webkit-text-stroke:0.25px #f0f0f0">ДЕЩБ</span>
<div style="left:1104px;top:405px;width:33px;height:18px;background:#262626"></div>
<span class="t" style="left:1107px;top:409px;font-size:12px;color:#eeeeee;transform-origin:0 0;transform:scaleX(1.193);-webkit-text-stroke:0.25px #eeeeee">ЗБ4</span>
<div style="left:1138px;top:405px;width:14px;height:18px;background:#8a8a8a"></div>
<div style="left:932px;top:425px;width:220px;height:2px;background:#4a4a4a"></div>
<span class="t" style="left:938px;top:433px;font-size:12px;color:#e8e8e8;transform-origin:0 0;transform:scaleX(0.984);-webkit-text-stroke:0.25px #e8e8e8">ЕЗД</span>
<span class="t" style="left:968px;top:432px;font-size:13px;color:#c8c8c8;transform-origin:0 0;transform:scaleX(1.000);-webkit-text-stroke:0.25px #c8c8c8">Ж</span>
<span class="t" style="left:992px;top:432px;font-size:13px;color:#c8c8c8;transform-origin:0 0;transform:scaleX(1.278);-webkit-text-stroke:0.25px #c8c8c8">Я</span>
<span class="t" style="left:1013px;top:432px;font-size:13px;color:#c8c8c8;transform-origin:0 0;transform:scaleX(1.407);-webkit-text-stroke:0.25px #c8c8c8">Б</span>
<span class="t" style="left:1036px;top:432px;font-size:13px;color:#c8c8c8;transform-origin:0 0;transform:scaleX(1.407);-webkit-text-stroke:0.25px #c8c8c8">Б</span>
<span class="t" style="left:1074px;top:433px;font-size:13px;color:#f0f0f0;transform-origin:0 0;transform:scaleX(1.228);-webkit-text-stroke:0.25px #f0f0f0">ЯБ</span>
<div style="left:1103px;top:432px;width:33px;height:18px;background:#262626"></div>
<span class="t" style="left:1106px;top:436px;font-size:12px;color:#eeeeee;transform-origin:0 0;transform:scaleX(1.124);-webkit-text-stroke:0.25px #eeeeee">ЗБЕ</span>
<div style="left:1138px;top:432px;width:14px;height:18px;background:#8a8a8a;border-radius:4px 0 0 4px"></div>
<div style="left:932px;top:453px;width:220px;height:2px;background:#444444"></div>
<div style="left:932px;top:455px;width:220px;height:26px;background:#555555;box-shadow:inset 0 -1px 0 #3e3e3e"></div>
<div style="left:962px;top:456px;width:188px;height:25px;background:#6a82a8"></div>
<div style="left:961px;top:455px;width:1px;height:26px;background:#404040"></div>
<div style="left:942px;top:465px;width:10px;height:7px;border-radius:50%;background:#3a3a3a;box-shadow:0 0 0 1px #777"></div>
<svg style="left:967px;top:463px" width="22" height="10"><path d="M0 4 H22 V6 H0 Z M4 1 H7 V9 H4 Z M14 1 H18 V9 H14 Z M18 3 L21 5 L18 7 Z" fill="#f2f2f2"/></svg>
<span class="t" style="left:1001px;top:462px;font-size:13px;color:#f4f4f4;transform-origin:0 0;transform:scaleX(1.031);-webkit-text-stroke:0.25px #f4f4f4">ЯЖЕ</span>
<div style="left:932px;top:481px;width:220px;height:22px;background:#555555;box-shadow:inset 0 -1px 0 #3e3e3e"></div>
<div style="left:961px;top:481px;width:1px;height:22px;background:#404040"></div>
<div style="left:942px;top:489px;width:10px;height:7px;border-radius:50%;background:#3a3a3a;box-shadow:0 0 0 1px #777"></div>
<svg style="left:967px;top:487px" width="22" height="10"><path d="M0 4 H22 V6 H0 Z M4 1 H7 V9 H4 Z M14 1 H18 V9 H14 Z M18 3 L21 5 L18 7 Z" fill="#f2f2f2"/></svg>
<span class="t" style="left:1001px;top:486px;font-size:13px;color:#f4f4f4;transform-origin:0 0;transform:scaleX(1.045);-webkit-text-stroke:0.25px #f4f4f4">ЕДЩ</span>
<div style="left:932px;top:503px;width:220px;height:21px;background:#555555;box-shadow:inset 0 -1px 0 #3e3e3e"></div>
<div style="left:961px;top:503px;width:1px;height:21px;background:#404040"></div>
<svg style="left:967px;top:508px" width="22" height="10"><path d="M0 4 H22 V6 H0 Z M4 1 H7 V9 H4 Z M14 1 H18 V9 H14 Z M18 3 L21 5 L18 7 Z" fill="#f2f2f2"/></svg>
<span class="t" style="left:1001px;top:507px;font-size:13px;color:#f4f4f4;transform-origin:0 0;transform:scaleX(1.087);-webkit-text-stroke:0.25px #f4f4f4">ЗЕЖ</span>
<div style="left:932px;top:524px;width:220px;height:19px;background:#555555;box-shadow:inset 0 -1px 0 #3e3e3e"></div>
<div style="left:961px;top:524px;width:1px;height:19px;background:#404040"></div>
<div style="left:942px;top:530px;width:10px;height:7px;border-radius:50%;background:#3a3a3a;box-shadow:0 0 0 1px #777"></div>
<span class="t" style="left:968px;top:527px;font-size:12px;color:#f0f0f0;transform-origin:0 0;transform:scaleX(0.875);-webkit-text-stroke:0.25px #f0f0f0">ЫЖ</span>
<span class="t" style="left:1001px;top:527px;font-size:13px;color:#f4f4f4;transform-origin:0 0;transform:scaleX(1.052);-webkit-text-stroke:0.25px #f4f4f4">ДЖЕ</span>
<div style="left:932px;top:543px;width:220px;height:41px;background:#555555;box-shadow:inset 0 -1px 0 #3e3e3e"></div>
<div style="left:961px;top:543px;width:1px;height:41px;background:#404040"></div>
<div style="left:941px;top:559px;width:12px;height:9px;border-radius:50%;background:#c8c8c8"></div>
<div style="left:945px;top:561px;width:4px;height:4px;border-radius:50%;background:#333"></div>
<div style="left:965px;top:548px;width:33px;height:32px;background:#fff;box-shadow:inset 0 0 0 1px #222"></div>
<span class="t" style="left:1004px;top:557px;font-size:13px;color:#f4f4f4;transform-origin:0 0;transform:scaleX(1.102);-webkit-text-stroke:0.25px #f4f4f4">ЗЕЩЯ</span>
<svg style="left:1121px;top:556px" width="17" height="15"><path d="M8.5 1 L16 14 H1 Z" fill="none" stroke="#b0b0b0" stroke-width="2.4"/></svg>
<div style="left:932px;top:584px;width:216px;height:254px;background:#474747"></div>
<div style="left:1148px;top:584px;width:4px;height:254px;background:#3a3a3a"></div>
<div style="left:932px;top:838px;width:220px;height:19px;background:#535353;box-shadow:inset 0 1px 0 #666"></div>
<svg style="left:966px;top:844px" width="14" height="13"><path d="M3 1 L6 1 L4 12 L1 12 Z M8 4 L13 4 L9 12 L7 10 Z" fill="#a8a8a8" fill-rule="evenodd"/></svg>
<svg style="left:994px;top:844px" width="15" height="13"><path d="M2 2 L13 1 L12 5 L8 7 L9 12 L6 12 L5 7 L1 5 Z" fill="#b8b8b8" fill-rule="evenodd"/></svg>
<svg style="left:1023px;top:843px" width="18" height="15"><path d="M0 2 H17 V14 H1 Z M4 6 H13 V8 H4 Z" fill="#f2f2f2" fill-rule="evenodd"/></svg>
<svg style="left:1056px;top:844px" width="14" height="13"><path d="M0 1 H13 V12 H0 Z M3 4 H10 V6 H3 Z M3 8 H9 V10 H3 Z" fill="#d8d8d8" fill-rule="evenodd"/></svg>
<svg style="left:1086px;top:844px" width="17" height="13"><path d="M1 3 L8 0 L11 4 L16 5 L12 9 L8 12 L4 8 L0 8 Z" fill="#bdbdbd" fill-rule="evenodd"/></svg>
<svg style="left:1120px;top:843px" width="15" height="15"><path d="M1 1 H14 V4 H1 Z M3 5 H12 V14 H3 Z" fill="#dcdcdc" fill-rule="evenodd"/></svg>
<div style="left:1044px;top:841px;width:7px;height:8px;background:#3a7ad0;border-radius:3px"></div>
<div style="left:194px;top:215px;width:565px;height:514px;border-radius:18px;background:#12161c;filter:blur(1.5px)"></div>
<div style="left:198px;top:219px;width:557px;height:506px;border-radius:15px;background:#a9c7ee"></div>
<div style="left:200px;top:221px;width:553px;height:502px;border-radius:13px;background:linear-gradient(180deg,#6f89ab 0px,#6482a8 60px,#46689a 160px,#25487a 260px,#1a3b6c 330px,#183868 100%)"></div>
<div style="left:200px;top:221px;width:553px;height:52px;border-radius:13px 13px 0 0;background:linear-gradient(rgba(255,255,255,.10),rgba(255,255,255,0) 60%),linear-gradient(90deg,#8196b4 0%,#7088aa 9%,#4a6892 22%,#284a7a 36%,#1f4273 55%,#2a4c7b 72%,#5d7aa2 84%,#7b93b4 92%,#6d87aa 100%)"></div>
<div style="left:209px;top:272px;width:535px;height:442px;border-radius:4px 4px 8px 8px;background:#a8c4e4"></div>
<div style="left:210px;top:273px;width:533px;height:440px;border-radius:3px 3px 7px 7px;background:#f0f0f0"></div>
<div style="left:230px;top:712px;width:440px;height:10px;background:radial-gradient(ellipse 50% 60% at 50% 45%,rgba(150,240,255,1) 0%,rgba(90,215,255,.95) 45%,rgba(50,150,230,.5) 75%,rgba(40,110,200,0) 100%)"></div>
<div style="left:209px;top:239px;width:18px;height:18px;border-radius:50%;background:radial-gradient(circle,rgba(245,250,245,1) 50%,rgba(230,240,235,.5) 62%,rgba(240,250,240,0) 75%)"></div>
<div style="left:212.5px;top:242.5px;width:11px;height:11px;border-radius:50%;background:radial-gradient(circle at 45% 35%,#ff6a50,#d81e10)"></div>
<div style="left:230px;top:239px;width:18px;height:18px;border-radius:50%;background:radial-gradient(circle,rgba(245,250,245,1) 50%,rgba(230,240,235,.5) 62%,rgba(240,250,240,0) 75%)"></div>
<div style="left:233.5px;top:242.5px;width:11px;height:11px;border-radius:50%;background:radial-gradient(circle at 45% 35%,#7ef070,#18b018)"></div>
<div style="left:251px;top:239px;width:18px;height:18px;border-radius:50%;background:radial-gradient(circle,rgba(245,250,245,1) 50%,rgba(230,240,235,.5) 62%,rgba(240,250,240,0) 75%)"></div>
<div style="left:254.5px;top:242.5px;width:11px;height:11px;border-radius:50%;background:radial-gradient(circle at 45% 35%,#7ef070,#18b018)"></div>
<svg style="left:250px;top:238px" width="165" height="36"><path d="M4 36 C12 34 14 22 18 10 C20 4 22 2 28 2 H140 C146 2 148 4 150 10 C154 22 156 34 164 36 Z" fill="#f2f2f2"/></svg>
<span class="t" style="left:285px;top:248px;font-size:14.5px;color:#000;transform-origin:0 0;transform:scaleX(1.256);-webkit-text-stroke:0.08px #000">Parrocade</span>
<div style="left:637px;top:223px;width:107px;height:32px;border-radius:6px;background:#d8e4f4"></div>
<div style="left:638px;top:224px;width:53px;height:30px;border-radius:5px 0 0 5px;background:linear-gradient(#c4dcf8,#7aa4e0 45%,#3f72c4 55%,#3a6cc0)"></div>
<div style="left:691px;top:224px;width:52px;height:30px;border-radius:0 5px 5px 0;background:linear-gradient(#ffc4c0,#f87070 45%,#ea1c1c 55%,#e41414)"></div>
<span class="t" style="left:651px;top:232px;font-size:13px;color:#ffffff;transform-origin:0 0;transform:scaleX(1.327);">ДЗ°</span>
<span class="t" style="left:702px;top:232px;font-size:13px;color:#ffffff;transform-origin:0 0;transform:scaleX(1.121);">ЖЕ°</span>
<div style="left:219px;top:286px;width:21px;height:18px;background:linear-gradient(#a8d4fa,#5a9ae8);box-shadow:inset 0 0 0 1.5px #2f68d0"></div>
<div style="left:223px;top:293px;width:13px;height:3px;background:#dfe9f8"></div>
<div style="left:247px;top:280px;width:29px;height:31px;border-radius:2px;background:linear-gradient(#b8e0ff,#7ab8f8 70%,#4a94ec);box-shadow:inset 0 0 0 2px #2a64d4"></div>
<svg style="left:252px;top:285px" width="18" height="20"><path d="M4 1.5 H10 C14.5 1.5 16 5 16 9.5 C16 15 13.5 18.5 9 18.5 H2 Z" fill="#b0d4fa" stroke="#12358a" stroke-width="2.6" stroke-linejoin="round"/><path d="M4 2 L2 18" stroke="#12358a" stroke-width="3"/></svg>
<div style="left:283px;top:280px;width:55px;height:31px;border-radius:3px;background:linear-gradient(#fbfbfb,#e6e6e6);box-shadow:inset 0 0 0 1px #9a9a9a;"></div>
<span class="t" style="left:292px;top:289px;font-size:14.5px;color:#000;transform-origin:0 0;transform:scaleX(1.150);-webkit-text-stroke:0.08px #000">Bac1</span>
<div style="left:350px;top:280px;width:179px;height:31px;border-radius:3px;background:linear-gradient(#fbfbfb,#e6e6e6);box-shadow:inset 0 0 0 1px #9a9a9a;background:linear-gradient(#f6f6f6,#ececec)"></div>
<span class="t" style="left:361px;top:289px;font-size:14.5px;color:#000;transform-origin:0 0;transform:scaleX(1.100);-webkit-text-stroke:0.08px #000">Beeend</span>
<div style="left:542px;top:280px;width:76px;height:31px;border-radius:3px;background:linear-gradient(#fbfbfb,#e6e6e6);box-shadow:inset 0 0 0 1px #9a9a9a;"></div>
<span class="t" style="left:553px;top:289px;font-size:14.5px;color:#000;transform-origin:0 0;transform:scaleX(1.001);-webkit-text-stroke:0.08px #000">Ves</span>
<div style="left:617px;top:280px;width:31px;height:31px;border-radius:3px;background:linear-gradient(#fbfbfb,#e6e6e6);box-shadow:inset 0 0 0 1px #9a9a9a;"></div>
<span class="t" style="left:627px;top:288px;font-size:15px;color:#222;">0</span>
<div style="left:210px;top:317px;width:533px;height:2px;background:#d4d4d4"></div>
<span class="t" style="left:227px;top:335px;font-size:20.5px;color:#000;transform-origin:0 0;transform:scaleX(0.995);-webkit-text-stroke:0.25px #000">Q nbuih to End commang.</span>
<div style="left:228px;top:368px;width:497px;height:184px;background:#ffffff;box-shadow:inset 0 0 0 1px #8e8e8e"></div>
<div style="left:229px;top:433px;width:495px;height:1px;background:#9a9a9a"></div>
<span class="t" style="left:246px;top:388px;font-size:18px;color:#000;transform-origin:0 0;transform:scaleX(1.055);-webkit-text-stroke:0.08px #000">Enat Epelacicé, wvié oeg eutle.</span>
<span class="t" style="left:246px;top:453px;font-size:18px;color:#000;transform-origin:0 0;transform:scaleX(1.059);-webkit-text-stroke:0.08px #000">Cvfi bcemme dó ferisqele Seeder suids.</span>
<svg style="left:694px;top:391px" width="15" height="12"><path d="M1 11 L2 3 C5 0 10 0 14 4 L13 9 C10 5 6 5 3 7 Z" fill="#bdbdbd"/></svg>
<svg style="left:694px;top:456px" width="15" height="12"><path d="M1 11 L2 3 C5 0 10 0 14 4 L13 9 C10 5 6 5 3 7 Z" fill="#bdbdbd"/></svg>
<div style="left:228px;top:573px;width:126px;height:33px;border-radius:3px;background:linear-gradient(#fcfcfc,#e4e4e4);box-shadow:inset 0 0 0 1.5px #3a80e6"></div>
<span class="t" style="left:267px;top:582px;font-size:14px;color:#000;transform-origin:0 0;transform:scaleX(1.098);-webkit-text-stroke:0.3px #000">SINet2</span>
<div style="left:210px;top:665px;width:533px;height:2px;background:#c4c4c4"></div>
<div style="left:228px;top:677px;width:118px;height:29px;border-radius:3px;background:linear-gradient(#fbfbfb,#e6e6e6);box-shadow:inset 0 0 0 1px #9a9a9a;"></div>
<div style="left:260px;top:678px;width:1px;height:27px;background:#a8a8a8"></div>
<div style="left:237px;top:686px;width:14px;height:12px;box-shadow:inset 0 0 0 1.5px #333;border-radius:2px"></div>
<svg style="left:238px;top:687px" width="13" height="11"><path d="M3 3 L11 9" stroke="#222" stroke-width="2"/></svg>
<span class="t" style="left:274px;top:684px;font-size:16px;color:#000;transform-origin:0 0;transform:scaleX(0.930);-webkit-text-stroke:0.08px #000">10s</span>
<div style="left:608px;top:677px;width:115px;height:33px;border-radius:4px;background:linear-gradient(#94cbff,#5aa6fa 45%,#3a8cf4);box-shadow:inset 0 0 0 1px #2f78e0"></div>
<span class="t" style="left:653px;top:687px;font-size:12.5px;color:#ffffff;font-weight:bold;transform-origin:0 0;transform:scaleX(0.828);">FILA</span>
</body></html>
